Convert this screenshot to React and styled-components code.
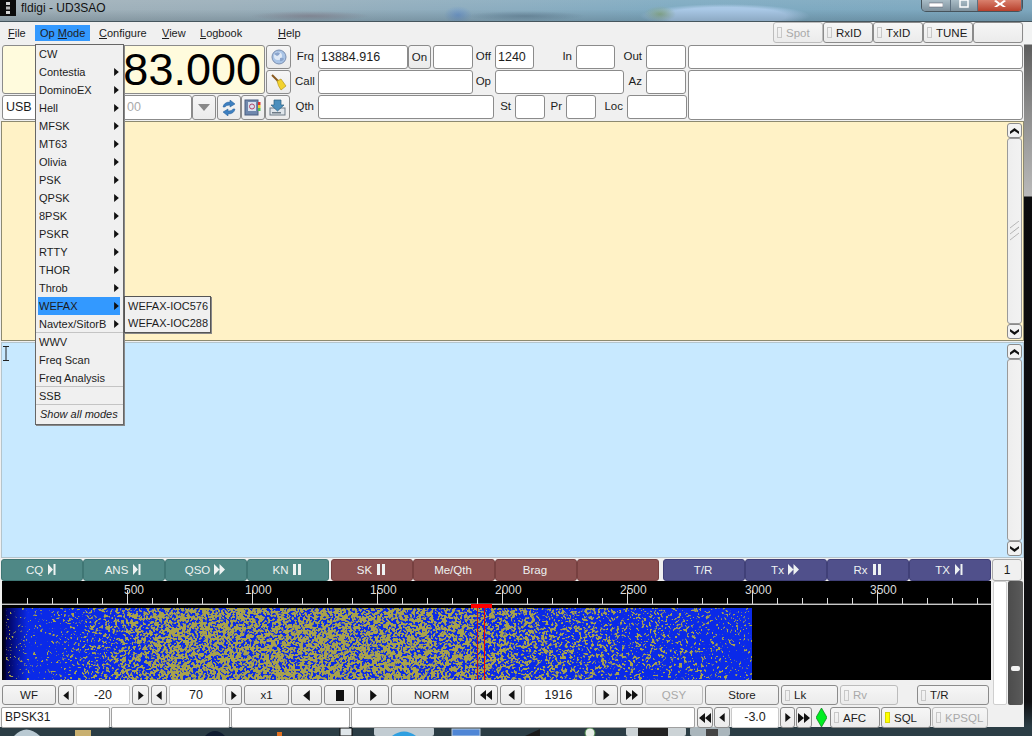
import React, { useEffect, useRef } from "react";
import styled, { createGlobalStyle } from "styled-components";

const Global = createGlobalStyle`
  html, body { margin: 0; padding: 0; width: 1032px; height: 736px; overflow: hidden; background: #2b3d45; }
  * { box-sizing: border-box; }
  #root { width: 1032px; height: 736px; }
`;

const FONT = `"Liberation Sans", Arial, sans-serif`;

const Screen = styled.div`
  width: 1032px; height: 736px; display: flex; flex-direction: column;
  font-family: ${FONT}; font-size: 11px; color: #1c1c1c; overflow: hidden;
`;
const TitleBar = styled.div`
  height: 22px; flex: none; display: flex; align-items: flex-start; position: relative;
  border-bottom: 1px solid #46565e;
  background:
    linear-gradient(180deg, rgba(255,255,255,.06) 0, rgba(255,255,255,0) 45%, rgba(40,60,72,.22) 100%),
    radial-gradient(ellipse 16px 8px at 660px 14px, #86a88c, transparent),
    radial-gradient(ellipse 85px 12px at 725px 16px, #a9c8e6 72%, transparent),
    radial-gradient(ellipse 14px 9px at 458px 15px, #6f97c8, transparent),
    radial-gradient(ellipse 60px 5px at 525px 16px, #6f8ea2, transparent),
    radial-gradient(ellipse 60px 5px at 310px 16px, #8c8f9c, transparent),
    linear-gradient(90deg, #a3b2ba 0, #9cb0bb 22%, #8badc0 50%, #7fabc2 66%, #7ea8bf 100%);
`;
const AppIcon = styled.svg` width: 16px; height: 16px; flex: none; display: block; `;
const TitleText = styled.div` margin: 1px 0 0 5px; font-size: 12px; line-height: 14px; color: #111; `;
const WinControls = styled.div`
  margin-left: auto; margin-right: 9px; display: flex; height: 12px;
  border: 1px solid #46535b; border-top: 0; border-radius: 0 0 5px 5px; overflow: hidden;
`;
const WinBtn = styled.div`
  width: ${p => p.$w}px; display: flex; justify-content: center; align-items: flex-start;
  border-right: 1px solid #5d7080;
  background: ${p => p.$close ? "linear-gradient(#d9806d, #b8402c)" : "linear-gradient(#a9bcc6, #7d909c)"};
`;
const Main = styled.div` flex: 1; display: flex; min-height: 0; `;
const Win = styled.div`
  width: 1024px; height: 705px; background: #f0f0f0; display: flex; flex-direction: column; position: relative;
`;
const Edge = styled.div`
  width: 8px;
  background: linear-gradient(to bottom, #f2f3f3 0 22px, #5e5e5e 23px, #8d8d8d 90px, #b9b9b9 174px, #0b0b0d 175px, #101013 680px, #2b3d45 705px);
`;
const MenuBar = styled.div` height: 22px; display: flex; align-items: stretch; flex: none; `;
const MenuLabel = styled.div`
  width: ${p => p.$w}px; margin: 3px 0; padding-left: ${p => p.$pad}px; line-height: 16px;
  background: ${p => p.$active ? "#3399ff" : "transparent"};
  span { text-decoration: underline; text-underline-offset: 1px; }
`;
const MenuButtons = styled.div` margin-left: auto; margin-right: 1px; display: flex; `;
const Btn = styled.div`
  width: ${p => p.$w}px; flex: none; height: ${p => p.$h || 20}px; margin-left: ${p => p.$ml || 0}px;
  display: flex; align-items: center; justify-content: ${p => p.$start ? "flex-start" : "center"};
  gap: 3px; padding-left: ${p => p.$start ? 3 : 0}px;
  border: 1px solid ${p => p.$off ? "#bcbcbc" : "#8b8b8b"}; border-radius: 3px;
  background: linear-gradient(#f6f6f6, #ebebeb);
  color: ${p => p.$off ? "#a9a9a9" : "#1c1c1c"}; font-size: 11.5px; line-height: 14px;
`;
const Lamp = styled.i`
  display: block; width: 5px; height: 11px; flex: none; border: 1px solid ${p => p.$on ? "#d8d800" : "#c8c8c8"};
  background: ${p => p.$on ? "#ffff00" : "transparent"}; margin-right: 1px;
`;
const TopPanel = styled.div` height: 75px; margin-top: 1px; flex: none; display: flex; padding-left: 2px; `;
const LeftBlock = styled.div` width: 293px; flex: none; display: flex; flex-direction: column; gap: 1px; `;
const DisplayRow = styled.div` display: flex; height: 49px; `;
const FreqDisplay = styled.div`
  width: 263px; border: 1px solid #8b8b8b; border-radius: 3px; background: #fffbdd;
  text-align: right; font-size: 45px; line-height: 47px; padding-right: 3px; color: #000;
`;
const SideBtns = styled.div` margin-left: 1px; display: flex; flex-direction: column; gap: 1px; `;
const ModeRow = styled.div` display: flex; height: 25px; `;
const ModeBox = styled.div`
  width: ${p => p.$w}px; border: 1px solid #8b8b8b; border-radius: 3px; background: #fff; padding-left: ${p => p.$pad || 3}px;
  line-height: 23px; font-size: 12.5px; color: ${p => p.$dim ? "#aaa" : "#1c1c1c"};
`;
const FieldsBlock = styled.div` width: 393px; flex: none; display: flex; flex-direction: column; gap: 1px; `;
const FieldRow = styled.div` display: flex; height: 24px; `;
const FieldLabel = styled.div`
  width: ${p => p.$w}px; flex: none; text-align: right; padding-right: 4px; line-height: 22px; font-size: 11.5px;
`;
const Field = styled.div`
  width: ${p => p.$w}px; flex: none; border: 1px solid #8b8b8b; border-radius: 3px; background: #fff;
  font-size: 12.5px; line-height: 22px; padding-left: 2px; margin-left: ${p => p.$ml || 0}px;
`;
const WideBlock = styled.div` flex: 1; margin-right: 1px; display: flex; flex-direction: column; gap: 1px; `;
const WideBox = styled.div` flex: ${p => p.$grow ? 1 : "none"}; height: ${p => p.$grow ? "auto" : "24px"}; border: 1px solid #8b8b8b; border-radius: 3px; background: #fff; `;
const Pane = styled.div`
  height: ${p => p.$h}px; margin: ${p => p.$mt}px 0 0 1px; flex: none; display: flex; justify-content: flex-end; position: relative;
  background: ${p => p.$bg}; border: 1px solid ${p => p.$line}; padding: 1px 0;
`;
const Scroll = styled.div` width: 15px; margin-right: 1px; display: flex; flex-direction: column; `;
const ScrollBtn = styled.div`
  height: 15px; flex: none; display: flex; align-items: center; justify-content: center;
  background: #f2f2f2; border: 1px solid #8b8b8b; border-radius: 3px;
`;
const Thumb = styled.div`
  flex: 1; background: linear-gradient(90deg, #eeeeee, #f2f2f2); border: 1px solid #9a9a9a; border-radius: 3px;
  display: flex; align-items: center; justify-content: center;
`;
const Caret = styled.svg` position: absolute; left: 1px; top: 3px; width: 6px; height: 15px; `;
const MacroRow = styled.div` height: 22px; margin-top: 1px; flex: none; display: flex; padding-left: 1px; `;
const Macro = styled.div`
  width: ${p => p.$w || 82}px; margin-left: ${p => p.$ml || 0}px; flex: none; display: flex; align-items: center; justify-content: center; gap: 4px;
  background: ${p => p.$bg}; color: #eef2f2; border: 1px solid ${p => p.$edge}; border-radius: 3px;
  font-size: 11.5px; padding-right: 2px;
`;
const CountBtn = styled.div`
  margin-left: 1px; width: 30px; border: 1px solid #a8a8a8; border-radius: 3px; background: #f0f0f0;
  font-size: 12px; display: flex; align-items: center; justify-content: center;
`;
const Lower = styled.div` height: 125px; flex: none; display: flex; `;
const LowerMain = styled.div` width: 992px; flex: none; display: flex; flex-direction: column; `;
const Ruler = styled.svg` display: block; width: 989px; height: 27px; margin: 0 0 0 2px; `;
const FallWrap = styled.div` position: relative; width: 989px; height: 72px; margin-left: 2px; background: #000; `;
const FallCanvas = styled.canvas` display: block; `;
const Cursor = styled.div`
  position: absolute; top: 0; bottom: 0; left: ${p => p.$x}px; width: 1px; background: ${p => p.$bg};
`;
const ControlRow = styled.div` display: flex; gap: 2px; padding-left: 2px; margin-top: 5px; height: 20px; `;
const ValueBox = styled.div`
  width: ${p => p.$w}px; flex: none; background: #fff; border: 1px solid #c9c9c9; border-radius: 2px;
  text-align: center; font-size: 12.5px; line-height: 19px; height: ${p => p.$h || 20}px;
`;
const SliderCol = styled.div` flex: 1; display: flex; padding: 0 1px 1px 1px; `;
const SliderWhite = styled.div` width: 14px; background: #fff; border: 1px solid #cfcfcf; border-radius: 2px; `;
const SliderDark = styled.div`
  flex: 1; margin-left: 1px; background: linear-gradient(90deg, #4c4c4c, #5a5a5a); border-radius: 2px; position: relative;
`;
const SliderKnob = styled.div`
  position: absolute; left: 3px; right: 3px; top: 85px; height: 5px; background: #f2f2f2; border-radius: 2px;
`;
const StatusRow = styled.div` display: flex; gap: 1px; padding-left: 1px; margin-top: 1px; height: 21px; `;
const StatusCell = styled.div`
  width: ${p => p.$w}px; flex: none; background: #fff; border: 1px solid #a0a0a0; border-radius: 2px;
  font-size: 12px; line-height: 19px; padding-left: 3px; height: 21px;
`;
const Diamond = styled.svg` width: 11px; height: 19px; margin: 0 2px 0 3px; flex: none; align-self: center; `;
const Taskbar = styled.svg` display: block; width: 1032px; height: 9px; flex: none; `;

const Menu = styled.div`
  position: absolute; left: 35px; top: 22px; width: 89px; height: 381px; padding: 0 3px 0 2px;
  background: #f0f0f0; border: 1px solid #666; box-shadow: 1px 1px 0 #888; z-index: 5;
`;
const MenuRow = styled.div`
  height: 18px; display: flex; align-items: center; justify-content: space-between;
  margin: ${p => p.$sep ? "0 -3px 0 -2px" : "0"};
  padding: 0 ${p => p.$sep ? 4 : 1}px 0 ${p => p.$sep ? 3 : 1}px;
  border-bottom: ${p => p.$sep ? "1px solid #c4c4c4" : "0"};
  background: ${p => p.$active ? "#3399ff" : "transparent"};
  font-style: ${p => p.$em ? "italic" : "normal"}; font-size: 11px;
  ${p => p.$em ? "padding-left: 2px;" : ""}
`;
const SubMenu = styled.div`
  position: absolute; left: 124px; top: 274px; width: 87px; height: 37px; padding: 1px 0;
  background: #f0f0f0; border: 1px solid #555; box-shadow: 1px 1px 0 #888; z-index: 6;
`;
const SubRow = styled.div` height: 17px; padding-left: 3px; line-height: 17px; font-size: 11px; white-space: nowrap; `;

const Tri = ({ dir = "r", w = 6, h = 9, c = "#111" }) => (
  <svg width={w} height={h} viewBox="0 0 6 10" style={{ display: "block" }}>
    <path d={dir === "r" ? "M0 0L6 5L0 10Z" : "M6 0L0 5L6 10Z"} fill={c} />
  </svg>
);
const Dbl = ({ dir = "r" }) => (
  <svg width="12" height="10" viewBox="0 0 12 10" style={{ display: "block" }}>
    <path d={dir === "r" ? "M0 0L6 5L0 10ZM6 0L12 5L6 10Z" : "M6 0L0 5L6 10ZM12 0L6 5L12 10Z"} fill="#111" />
  </svg>
);
const MacroGlyph = ({ kind }) => {
  const d = { end: "M1 0L6 5.5L1 11ZM6.5 0H8.5V11H6.5Z", fwd: "M0 0L5.5 5.5L0 11ZM5.5 0L11 5.5L5.5 11Z", pause: "M1 0H4V11H1ZM6 0H9V11H6Z" }[kind];
  return <svg width={kind === "fwd" ? 11 : 9} height="11" viewBox={kind === "fwd" ? "0 0 11 11" : "0 0 9 11"} style={{ display: "block", marginBottom: 2 }}><path d={d} fill="#eef2f2" /></svg>;
};

const Globe = () => (
  <svg width="16" height="16" viewBox="0 0 16 16"><circle cx="8" cy="8" r="7" fill="#a9c4e6" stroke="#7b8fb0" /><circle cx="7" cy="7" r="4" fill="#dfe9f6" /><path d="M3 5q3-3 6-1q-1 3-3 3zM9 9q3-1 4 1q-2 3-4 2z" fill="#8aa4cc" /></svg>
);
const Broom = () => (
  <svg width="18" height="18" viewBox="0 0 18 18"><path d="M2 2L9 9" stroke="#8a5a20" strokeWidth="2" /><path d="M7 8L11 6L16 13L11 17Q8 13 7 8Z" fill="#f2d22e" stroke="#a98a10" strokeWidth=".6" /></svg>
);
const Refresh = () => (
  <svg width="16" height="16" viewBox="0 0 16 16"><path d="M2 7Q3 2 9 2V0L14 4L9 7V5Q5 5 4 7Z" fill="#3d7fc0" stroke="#1f5a96" strokeWidth=".5" /><path d="M14 9Q13 14 7 14V16L2 12L7 9V11Q11 11 12 9Z" fill="#3d7fc0" stroke="#1f5a96" strokeWidth=".5" /></svg>
);
const Book = () => (
  <svg width="18" height="17" viewBox="0 0 18 17"><rect x="1" y="1" width="13" height="15" fill="#6f88ad" stroke="#4a5f80" /><rect x="4" y="3" width="8" height="9" fill="#d9e1ee" /><circle cx="8" cy="7.5" r="2.5" fill="none" stroke="#b5486a" /><rect x="14" y="3" width="2.5" height="3" fill="#d33" /><rect x="14" y="6" width="2.5" height="3" fill="#ec3" /><rect x="14" y="9" width="2.5" height="3" fill="#5b5" /></svg>
);
const Save = () => (
  <svg width="17" height="17" viewBox="0 0 17 17"><rect x="1" y="9" width="15" height="7" fill="#dfe5ea" stroke="#6d7a86" /><path d="M5 1H12V6H15L8.5 12L2 6H5Z" fill="#4b8fbd" stroke="#2d607f" strokeWidth=".7" /><rect x="3" y="13" width="9" height="1.5" fill="#6d7a86" /></svg>
);
const UpDown = ({ down }) => (
  <svg width="9" height="6" viewBox="0 0 9 6"><path d={down ? "M0 0L4.5 3L9 0V2.5L4.5 6L0 2.5Z" : "M0 6L4.5 3L9 6V3.5L4.5 0L0 3.5Z"} fill="#111" /></svg>
);

function ScrollBar({ grip }) {
  return (
    <Scroll>
      <ScrollBtn><UpDown /></ScrollBtn>
      <Thumb>
        {grip && (
          <svg width="9" height="20" viewBox="0 0 9 20">
            <path d="M0 7L9 0M0 13L9 6M0 19L9 12" stroke="#a8a8a8" strokeWidth=".8" fill="none" />
          </svg>
        )}
      </Thumb>
      <ScrollBtn><UpDown down /></ScrollBtn>
    </Scroll>
  );
}

function Waterfall() {
  const ref = useRef(null);
  useEffect(() => {
    const ctx = ref.current.getContext("2d");
    const W = 750, H = 72;
    let a = 0x9e3779b9;
    const rnd = () => {
      a = (a + 0x6d2b79f5) | 0;
      let t = Math.imul(a ^ (a >>> 15), 1 | a);
      t = (t + Math.imul(t ^ (t >>> 7), 61 | t)) ^ t;
      return ((t ^ (t >>> 14)) >>> 0) / 4294967296;
    };
    const noise = new Float32Array((W + 2) * (H + 2));
    for (let i = 0; i < noise.length; i += 1) noise[i] = rnd();
    const at = (x, y) => noise[y * (W + 2) + x];
    const density = x => {
      if (x < 30) return 0.02;
      if (x < 170) return 0.02 + (x - 30) / 140 * 0.6;
      if (x < 400) return 0.62;
      if (x < 750) return 0.62 - (x - 400) / 350 * 0.52;
      return 0.1;
    };
    const BLUE = [10, 42, 232];
    const OLIVE = [168, 162, 76];
    for (let y = 0; y < H; y += 1) {
      for (let x = 0; x < W; x += 1) {
        const v = (at(x, y) + at(x + 1, y) + at(x, y + 1) + at(x + 1, y + 1)) / 4;
        const z = 0.5 + (0.5 - density(x)) * 0.5;
        const t = Math.max(0, Math.min(1, (v - z + 0.05) / 0.1));
        const ramp = Math.max(0, Math.min(1, (x - 3) / 22));
        const c = [0, 1, 2].map(k => {
          const base = k === 2 ? BLUE[2] * (0.35 + 0.65 * ramp) : BLUE[k] * ramp;
          return Math.round(base + (OLIVE[k] - base) * t);
        });
        ctx.fillStyle = x < 4 ? `rgb(0,0,${10 + x * 15})` : `rgb(${c[0]},${c[1]},${c[2]})`;
        ctx.fillRect(x, y, 1, 1);
      }
    }
  }, []);
  return <FallCanvas ref={ref} width={750} height={72} />;
}

const MODES = [
  ["CW"], ["Contestia", 1], ["DominoEX", 1], ["Hell", 1], ["MFSK", 1], ["MT63", 1], ["Olivia", 1],
  ["PSK", 1], ["QPSK", 1], ["8PSK", 1], ["PSKR", 1], ["RTTY", 1], ["THOR", 1], ["Throb", 1],
];

const TICKS = Array.from({ length: 39 }, (_, i) => 25 + i * 25);
const LABELS = [[500, 122], [1000, 243], [1500, 368], [2000, 493], [2500, 618], [3000, 743], [3500, 868]];

export default function App() {
  return (
    <Screen>
      <Global />
      <TitleBar>
        <AppIcon viewBox="0 0 16 16">
          <rect width="16" height="16" fill="#0c0c0c" />
          <rect x="6" y="2" width="4" height="3" fill="#d5d5d5" /><rect x="6" y="6.5" width="4" height="3" fill="#bbb" /><rect x="6" y="11" width="4" height="3" fill="#d5d5d5" />
        </AppIcon>
        <TitleText>fldigi - UD3SAO</TitleText>
        <WinControls>
          <WinBtn $w={29}><svg width="14" height="8"><rect x="0" y="3" width="14" height="4" fill="#fff" stroke="#556" strokeWidth=".5" /></svg></WinBtn>
          <WinBtn $w={27}><svg width="10" height="9"><rect x="1" y="0" width="8" height="7" fill="none" stroke="#fff" strokeWidth="1.5" /></svg></WinBtn>
          <WinBtn $w={44} $close><svg width="14" height="8"><path d="M3 0L7 3L11 0L13 1L9 4L13 7H10L7 5L4 7H1L5 4L1 1Z" fill="#fff" /></svg></WinBtn>
        </WinControls>
      </TitleBar>
      <Main>
        <Win>
          <MenuBar>
            <MenuLabel $w={35} $pad={8}><span>F</span>ile</MenuLabel>
            <MenuLabel $w={55} $pad={5} $active>Op <span>M</span>ode</MenuLabel>
            <MenuLabel $w={63} $pad={9}><span>C</span>onfigure</MenuLabel>
            <MenuLabel $w={38} $pad={9}><span>V</span>iew</MenuLabel>
            <MenuLabel $w={87} $pad={9}><span>L</span>ogbook</MenuLabel>
            <MenuLabel $w={40} $pad={0}><span>H</span>elp</MenuLabel>
            <MenuButtons>
              <Btn $w={50} $h={21} $start $off><Lamp />Spot</Btn>
              <Btn $w={50} $h={21} $start><Lamp />RxID</Btn>
              <Btn $w={50} $h={21} $start><Lamp />TxID</Btn>
              <Btn $w={50} $h={21} $start><Lamp />TUNE</Btn>
              <Btn $w={50} $h={21} />
            </MenuButtons>
          </MenuBar>

          <TopPanel>
            <LeftBlock>
              <DisplayRow>
                <FreqDisplay>83.000</FreqDisplay>
                <SideBtns>
                  <Btn $w={25} $h={24}><Globe /></Btn>
                  <Btn $w={25} $h={24}><Broom /></Btn>
                </SideBtns>
              </DisplayRow>
              <ModeRow>
                <ModeBox $w={100}>USB</ModeBox>
                <ModeBox $w={90} $pad={24} $dim>00</ModeBox>
                <Btn $w={24} $h={25}><svg width="12" height="7"><path d="M0 0H12L6 7Z" fill="#888" /></svg></Btn>
                <Btn $w={24} $h={25} $ml={1}><Refresh /></Btn>
                <Btn $w={24} $h={25}><Book /></Btn>
                <Btn $w={25} $h={25}><Save /></Btn>
              </ModeRow>
            </LeftBlock>
            <FieldsBlock>
              <FieldRow>
                <FieldLabel $w={23}>Frq</FieldLabel>
                <Field $w={90}>13884.916</Field>
                <Btn $w={23} $h={24}>On</Btn>
                <Field $w={40} $ml={2} />
                <FieldLabel $w={22}>Off</FieldLabel>
                <Field $w={39}>1240</Field>
                <FieldLabel $w={42}>In</FieldLabel>
                <Field $w={39} />
                <FieldLabel $w={31}>Out</FieldLabel>
                <Field $w={40} />
              </FieldRow>
              <FieldRow>
                <FieldLabel $w={23}>Call</FieldLabel>
                <Field $w={155} />
                <FieldLabel $w={22}>Op</FieldLabel>
                <Field $w={129} />
                <FieldLabel $w={22}>Az</FieldLabel>
                <Field $w={40} />
              </FieldRow>
              <FieldRow>
                <FieldLabel $w={23}>Qth</FieldLabel>
                <Field $w={176} />
                <FieldLabel $w={21}>St</FieldLabel>
                <Field $w={30} />
                <FieldLabel $w={21}>Pr</FieldLabel>
                <Field $w={30} />
                <FieldLabel $w={31}>Loc</FieldLabel>
                <Field $w={60} />
              </FieldRow>
            </FieldsBlock>
            <WideBlock>
              <WideBox />
              <WideBox $grow />
            </WideBlock>
          </TopPanel>

          <Pane $h={220} $mt={1} $bg="#fff2c6" $line="#8d8a70"><ScrollBar grip /></Pane>
          <Pane $h={216} $mt={1} $bg="#c8e9ff" $line="#b4c4cc">
            <Caret viewBox="0 0 6 15"><path d="M0 .5H6M3 .5V14.5M0 14.5H6" stroke="#222" fill="none" /></Caret>
            <ScrollBar />
          </Pane>

          <MacroRow>
            <Macro $bg="#4f8886" $edge="#3f7674">CQ <MacroGlyph kind="end" /></Macro>
            <Macro $bg="#4f8886" $edge="#3f7674">ANS <MacroGlyph kind="end" /></Macro>
            <Macro $bg="#4f8886" $edge="#3f7674">QSO <MacroGlyph kind="fwd" /></Macro>
            <Macro $bg="#4f8886" $edge="#3f7674">KN <MacroGlyph kind="pause" /></Macro>
            <Macro $bg="#8b5050" $edge="#774040" $ml={2}>SK <MacroGlyph kind="pause" /></Macro>
            <Macro $bg="#8b5050" $edge="#774040">Me/Qth</Macro>
            <Macro $bg="#8b5050" $edge="#774040">Brag</Macro>
            <Macro $bg="#8b5050" $edge="#774040" />
            <Macro $bg="#50508b" $edge="#404078" $ml={4}>T/R</Macro>
            <Macro $bg="#50508b" $edge="#404078">Tx <MacroGlyph kind="fwd" /></Macro>
            <Macro $bg="#50508b" $edge="#404078">Rx <MacroGlyph kind="pause" /></Macro>
            <Macro $bg="#50508b" $edge="#404078">TX <MacroGlyph kind="end" /></Macro>
            <CountBtn>1</CountBtn>
          </MacroRow>

          <Lower>
            <LowerMain>
              <Ruler viewBox="0 0 989 27">
                <rect width="989" height="27" fill="#000" />
                {TICKS.map(x => {
                  const major = x % 125 === 0;
                  return <line key={x} x1={x + 0.5} x2={x + 0.5} y1={major ? 9 : 17} y2={23} stroke="#dcdcdc" />;
                })}
                {LABELS.map(([v, x]) => (
                  <text key={v} x={x} y={13} fill="#dcdcdc" fontFamily={FONT} fontSize="12">{v}</text>
                ))}
                <rect y="22.6" width="989" height="1.4" fill="#c9c9c9" />
                <rect x="469" y="23" width="21" height="4" fill="#f00" />
              </Ruler>
              <FallWrap>
                <Waterfall />
                <Cursor $x={475} $bg="#c01818" />
                <Cursor $x={482} $bg="#f00000" />
              </FallWrap>
              <ControlRow>
                <Btn $w={54}>WF</Btn>
                <Btn $w={16}><Tri dir="l" /></Btn>
                <ValueBox $w={54}>-20</ValueBox>
                <Btn $w={17}><Tri /></Btn>
                <Btn $w={16}><Tri dir="l" /></Btn>
                <ValueBox $w={54}>70</ValueBox>
                <Btn $w={17}><Tri /></Btn>
                <Btn $w={45}>x1</Btn>
                <Btn $w={31}><Tri dir="l" w={7} h={11} /></Btn>
                <Btn $w={31}><svg width="8" height="11"><rect width="8" height="11" fill="#111" /></svg></Btn>
                <Btn $w={32}><Tri w={7} h={11} /></Btn>
                <Btn $w={81}>NORM</Btn>
                <Btn $w={24}><Dbl dir="l" /></Btn>
                <Btn $w={22}><Tri dir="l" w={7} h={10} /></Btn>
                <ValueBox $w={69}>1916</ValueBox>
                <Btn $w={23}><Tri w={7} h={10} /></Btn>
                <Btn $w={23}><Dbl /></Btn>
                <Btn $w={58} $off>QSY</Btn>
                <Btn $w={74}>Store</Btn>
                <Btn $w={57} $start><Lamp />Lk</Btn>
                <Btn $w={58} $start $off><Lamp />Rv</Btn>
                <Btn $w={72} $start $ml={17}><Lamp />T/R</Btn>
              </ControlRow>
            </LowerMain>
            <SliderCol>
              <SliderWhite />
              <SliderDark><SliderKnob /></SliderDark>
            </SliderCol>
          </Lower>

          <StatusRow>
            <StatusCell $w={109}>BPSK31</StatusCell>
            <StatusCell $w={119} />
            <StatusCell $w={119} />
            <StatusCell $w={344} />
            <Btn $w={16} $h={21} $ml={1}><Dbl dir="l" /></Btn>
            <Btn $w={16} $h={21}><Tri dir="l" /></Btn>
            <ValueBox $w={48} $h={21}>-3.0</ValueBox>
            <Btn $w={15} $h={21}><Tri /></Btn>
            <Btn $w={16} $h={21}><Dbl /></Btn>
            <Diamond viewBox="0 0 11 19"><path d="M5.5 0L11 9.5L5.5 19L0 9.5Z" fill="#00ee22" stroke="#0a7a1a" strokeWidth=".7" /></Diamond>
            <Btn $w={50} $h={21} $start><Lamp />AFC</Btn>
            <Btn $w={50} $h={21} $start><Lamp $on />SQL</Btn>
            <Btn $w={56} $h={21} $start $off><Lamp />KPSQL</Btn>
          </StatusRow>

          <Menu>
            {MODES.map(([label, sub]) => (
              <MenuRow key={label}>{label}{sub && <Tri w={5} h={8} />}</MenuRow>
            ))}
            <MenuRow $active>WEFAX<Tri w={5} h={8} /></MenuRow>
            <MenuRow $sep>Navtex/SitorB<Tri w={5} h={8} /></MenuRow>
            <MenuRow>WWV</MenuRow>
            <MenuRow>Freq Scan</MenuRow>
            <MenuRow $sep>Freq Analysis</MenuRow>
            <MenuRow $sep>SSB</MenuRow>
            <MenuRow $em>Show all modes</MenuRow>
          </Menu>
          <SubMenu>
            <SubRow>WEFAX-IOC576</SubRow>
            <SubRow>WEFAX-IOC288</SubRow>
          </SubMenu>
        </Win>
        <Edge />
      </Main>
      <Taskbar viewBox="0 0 1032 9">
        <rect width="1032" height="9" fill="#2b3d45" />
        <path d="M14 9Q26 -4 40 9Z" fill="#b9c9d2" />
        <rect x="75" y="3" width="16" height="6" fill="#c9b070" />
        <path d="M205 9Q215 -1 225 9Z" fill="#0f1c30" />
        <rect x="277" y="5" width="5" height="4" fill="#e07020" />
        <rect x="340" y="1" width="12" height="8" fill="#dfe6ea" stroke="#0a0a0a" />
        <rect x="374" y="0" width="60" height="9" rx="2" fill="#c2ccd2" />
        <path d="M392 9Q404 0 416 9Z" fill="#2f9fe0" />
        <rect x="452" y="2" width="28" height="7" fill="#4f86d6" stroke="#bcd" />
        <path d="M525 9L540 2V9Z" fill="#1a1a1a" />
        <circle cx="590" cy="6" r="5" fill="#e8eee8" stroke="#4a8a4a" />
        <rect x="626" y="0" width="60" height="9" rx="2" fill="#ccd3d6" />
        <rect x="638" y="1" width="30" height="8" fill="#222" />
        <rect x="690" y="0" width="40" height="9" rx="2" fill="#aab6bc" />
        <rect x="706" y="2" width="12" height="7" fill="#444" />
      </Taskbar>
    </Screen>
  );
}
